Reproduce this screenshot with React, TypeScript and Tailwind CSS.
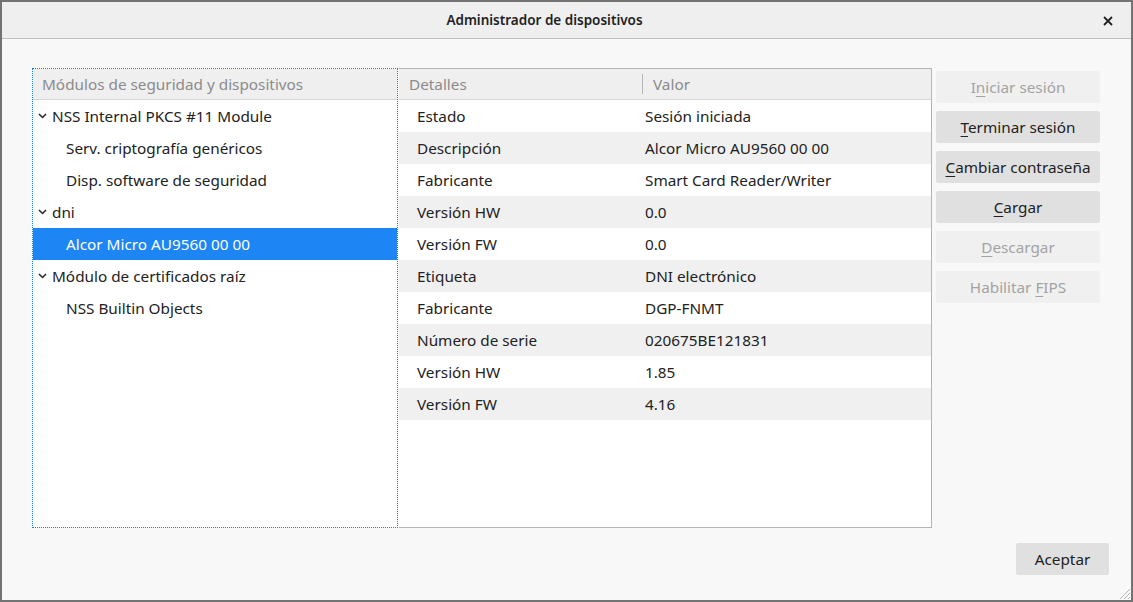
import React from 'react';

const font = { fontFamily: '"Noto Sans", "Open Sans", sans-serif' };

const tree = [
  { label: 'NSS Internal PKCS #11 Module', level: 0 },
  { label: 'Serv. criptografía genéricos', level: 1 },
  { label: 'Disp. software de seguridad', level: 1 },
  { label: 'dni', level: 0 },
  { label: 'Alcor Micro AU9560 00 00', level: 1, selected: true },
  { label: 'Módulo de certificados raíz', level: 0 },
  { label: 'NSS Builtin Objects', level: 1 },
];

const details = [
  ['Estado', 'Sesión iniciada'],
  ['Descripción', 'Alcor Micro AU9560 00 00'],
  ['Fabricante', 'Smart Card Reader/Writer'],
  ['Versión HW', '0.0'],
  ['Versión FW', '0.0'],
  ['Etiqueta', 'DNI electrónico'],
  ['Fabricante', 'DGP-FNMT'],
  ['Número de serie', '020675BE121831'],
  ['Versión HW', '1.85'],
  ['Versión FW', '4.16'],
];

const buttons = [
  { pre: 'I', key: 'n', post: 'iciar sesión', disabled: true },
  { pre: '', key: 'T', post: 'erminar sesión' },
  { pre: '', key: 'C', post: 'ambiar contraseña' },
  { pre: '', key: 'C', post: 'argar' },
  { pre: '', key: 'D', post: 'escargar', disabled: true },
  { pre: 'Habilitar ', key: 'F', post: 'IPS', disabled: true },
];

const Chevron = () => (
  <svg width="9" height="6" viewBox="0 0 9 6" className="mr-[5px] ml-[5px]">
    <path d="M1 1 L4.5 4.5 L8 1" fill="none" stroke="currentColor" strokeWidth="1.5" />
  </svg>
);

export default function App() {
  return (
    <div
      className="w-[1133px] h-[602px] border-2 border-[#737373] bg-[#f8f8f8] flex flex-col text-[#2e3436] relative overflow-hidden"
      style={font}
    >
      <header className="h-[37px] shrink-0 bg-[#efefef] border-b border-[#c0c0c0] flex items-center justify-center pr-[44px] relative">
        <span className="text-[13.5px] font-semibold text-[#222]">Administrador de dispositivos</span>
        <svg className="absolute right-[18px] top-[14px]" width="10" height="10" viewBox="0 0 10 10">
          <path d="M1 1 L9 9 M9 1 L1 9" stroke="#222" strokeWidth="1.8" />
        </svg>
      </header>

      <div className="flex pl-[30px] pt-[29px]">
        <div className="w-[366px] h-[460px] border border-dotted border-[#1c7ae6] bg-white flex flex-col">
          <div className="h-[31px] bg-[#efefef] border-b border-[#d6d6d6] flex items-center pl-[9px] text-[15.3px] text-[#8b8b8b]">
            Módulos de seguridad y dispositivos
          </div>
          {tree.map((t, i) => (
            <div
              key={i}
              className={`h-[32px] flex items-center text-[15.3px] ${
                t.selected ? 'bg-[#1e86f4] text-white' : 'text-[#222]'
              } ${t.level === 1 ? 'pl-[33px]' : 'pl-0'}`}
            >
              {t.level === 0 && <Chevron />}
              {t.label}
            </div>
          ))}
        </div>

        <div className="w-[533px] h-[460px] border border-[#b4b4b4] border-l-0 bg-white flex flex-col ml-px">
          <div className="h-[31px] bg-[#efefef] border-b border-[#d6d6d6] flex items-center text-[15.3px] text-[#8b8b8b] shrink-0">
            <span className="w-[243px] pl-[10px]">Detalles</span>
            <span className="w-px h-[20px] bg-[#b5b5b5]" />
            <span className="pl-[10px]">Valor</span>
          </div>
          {details.map(([k, v], i) => (
            <div
              key={i}
              className={`h-[32px] flex items-center text-[15.3px] text-[#222] shrink-0 ${
                i % 2 === 1 ? 'bg-[#f0f0f0]' : 'bg-white'
              }`}
            >
              <span className="w-[246px] pl-[18px]">{k}</span>
              <span>{v}</span>
            </div>
          ))}
        </div>

        <div className="ml-[4px] pt-[3px] w-[164px] flex flex-col gap-[8px]">
          {buttons.map((b, i) => (
            <div
              key={i}
              className={`h-[32px] flex items-center justify-center text-[15.3px] rounded-[2px] ${
                b.disabled ? 'bg-[#f0f0f0] text-[#a3a3a3]' : 'bg-[#e0e0e0] text-[#222]'
              }`}
            >
              <span className="whitespace-pre">
                {b.pre}
                <span className="underline underline-offset-[3px]">{b.key}</span>
                {b.post}
              </span>
            </div>
          ))}
        </div>
      </div>

      <div className="flex justify-end pr-[22px] pt-[15px]">
        <div className="w-[93px] h-[32px] bg-[#e0e0e0] rounded-[2px] flex items-center justify-center text-[15.3px] text-[#222]">
          Aceptar
        </div>
      </div>

      <svg className="absolute right-0 bottom-0" width="14" height="14" viewBox="0 0 14 14">
        <path d="M13 3 L3 13 M13 7 L7 13 M13 11 L11 13" stroke="#b5b5b5" strokeWidth="1" />
      </svg>
    </div>
  );
}
